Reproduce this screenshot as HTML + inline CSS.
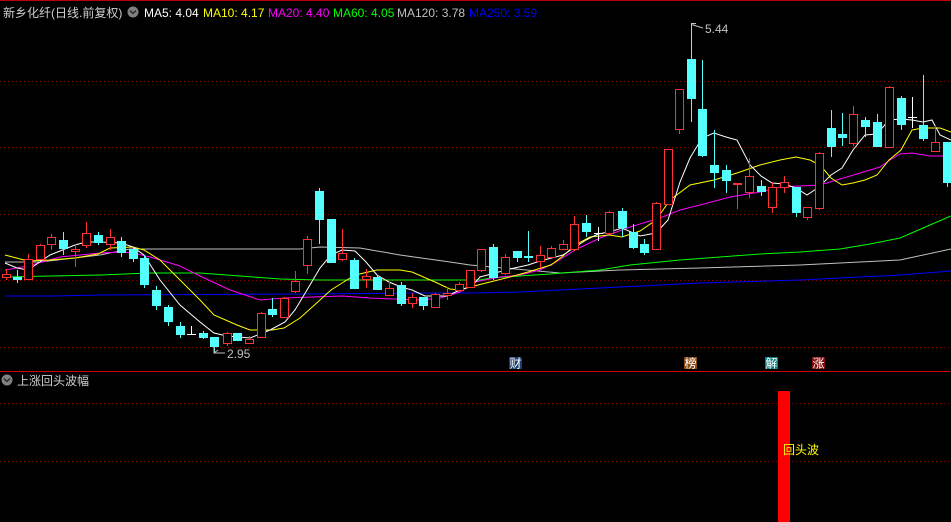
<!DOCTYPE html>
<html><head><meta charset="utf-8"><style>
html,body{margin:0;padding:0;background:#000;width:951px;height:522px;overflow:hidden}
svg{display:block}
text{font-family:"Liberation Sans","Noto Sans CJK SC",sans-serif;font-size:12px}
.g line{stroke:#8a0000;stroke-dasharray:1 3;stroke-width:1}
.r line,.r rect{stroke:#ff3232;stroke-width:1}
.r rect{fill:#000}
.c line,.c rect{stroke:#54ffff;stroke-width:1}
.c rect{fill:#54ffff}
.m polyline{fill:none;stroke-width:1}
</style></head><body>
<svg width="951" height="522" viewBox="0 0 951 522" xmlns="http://www.w3.org/2000/svg">
<rect width="951" height="522" fill="#000"/>
<line x1="0" y1="0.5" x2="951" y2="0.5" stroke="#c00000"/>
<g class="g">
<line x1="0" y1="81.5" x2="951" y2="81.5"/><line x1="0" y1="147.5" x2="951" y2="147.5"/>
<line x1="0" y1="214.5" x2="951" y2="214.5"/><line x1="0" y1="280.5" x2="951" y2="280.5"/>
<line x1="0" y1="347.5" x2="951" y2="347.5"/>
<line x1="0" y1="403.5" x2="951" y2="403.5"/><line x1="0" y1="461.5" x2="951" y2="461.5"/>
</g>
<line x1="0" y1="371.5" x2="951" y2="371.5" stroke="#d00000"/>

<g class="m">
<polyline stroke="#0000ff" points="5,296 55,296 100,295 300,294 420,293 470,293 520,292 620,287 700,283 800,280 900,275 951,271"/>
<polyline stroke="#c0c0c0" points="5,262 40,262 100,255 130,249 300,249 320,247 360,248 400,255 450,262 470,265 560,273 620,270 700,268 800,265 900,260 951,249"/>
<polyline stroke="#00ff00" points="5,277 50,276 100,275 150,273 200,273 240,276 280,279 320,280 480,280 490,278 550,274 600,270 630,265 680,260 720,257 760,254 800,252 840,249 870,244 900,238 930,225 951,216"/>
<polyline stroke="#ff00ff" points="5,270 28,266 60,257 100,253 121,252 133,253 150,257 180,266 200,276 230,290 260,300 284,298 342,296 370,298 420,300 440,298 460,292 475,282 500,277 520,275 540,270 556,262 575,250 600,238 630,227 660,218 680,210 700,205 730,197 760,192 780,187 820,185 840,179 860,173 880,167 890,160 900,154 912,153 930,156 951,156"/>
<polyline stroke="#ffff00" points="5,255 28,261 50,260 75,258 98,254 110,248 133,247 144,250 160,260 180,280 200,300 214,315 237,325 250,330 272,330 284,328 300,318 320,300 331,290 342,283 355,275 377,270 400,270 412,272 435,282 450,289 460,290 470,287 490,282 510,277 528,272 551,265 563,256 575,245 590,237 609,235 622,237 640,231 656,220 670,200 690,185 714,180 737,173 760,165 780,160 796,157 810,160 820,165 831,178 842,185 853,183 865,180 877,175 889,160 901,150 912,130 923,128 940,128 951,132"/>
<polyline stroke="#ffffff" points="5,263 17,268 28,270 50,255 75,245 86,242 100,242 121,243 133,247 144,255 160,280 180,305 200,322 214,333 227,336 250,338 270,330 285,322 295,310 307,290 320,268 331,255 342,250 355,251 366,262 377,275 389,282 401,287 412,290 425,296 447,296 460,290 472,286 480,277 495,273 510,269 528,265 540,261 563,255 586,240 598,234 609,232 622,228 640,236 656,233 668,220 680,182 690,158 702,138 714,133 726,137 737,140 750,165 761,176 772,183 784,184 796,188 807,195 819,187 831,175 842,168 853,150 865,135 877,134 889,120 901,119 912,120 923,122 932,120 940,135 951,140"/>
</g>

<g class="r">
<line x1="6.5" y1="269" x2="6.5" y2="280"/><rect x="2.5" y="274.5" width="8" height="3"/>
<line x1="28.5" y1="254" x2="28.5" y2="280"/><rect x="24.5" y="259.5" width="8" height="20"/>
<line x1="40.5" y1="244" x2="40.5" y2="260"/><rect x="36.5" y="245.5" width="8" height="14"/>
<line x1="51.5" y1="234" x2="51.5" y2="250"/><rect x="47.5" y="237.5" width="8" height="7"/>
<line x1="75.5" y1="244" x2="75.5" y2="267"/><rect x="71.5" y="249.5" width="8" height="2"/>
<line x1="86.5" y1="222" x2="86.5" y2="248"/><rect x="82.5" y="233.5" width="8" height="12"/>
<line x1="110.5" y1="229" x2="110.5" y2="250"/><rect x="106.5" y="237.5" width="8" height="7"/>
<line x1="227.5" y1="332" x2="227.5" y2="346"/><rect x="223.5" y="333.5" width="8" height="10"/>
<line x1="249.5" y1="336" x2="249.5" y2="343"/><rect x="245.5" y="339.5" width="8" height="4"/>
<line x1="261.5" y1="312" x2="261.5" y2="338"/><rect x="257.5" y="313.5" width="8" height="24"/>
<line x1="284.5" y1="297" x2="284.5" y2="318"/><rect x="280.5" y="298.5" width="8" height="19"/>
<line x1="295.5" y1="271" x2="295.5" y2="293"/><rect x="291.5" y="281.5" width="8" height="10"/>
<line x1="307.5" y1="236" x2="307.5" y2="274"/><rect x="303.5" y="239.5" width="8" height="26"/>
<line x1="342.5" y1="229" x2="342.5" y2="261"/><rect x="338.5" y="253.5" width="8" height="6"/>
<line x1="366.5" y1="269" x2="366.5" y2="288"/><rect x="362.5" y="276.5" width="8" height="3"/>
<line x1="389.5" y1="282" x2="389.5" y2="296"/><rect x="385.5" y="288.5" width="8" height="7"/>
<line x1="412.5" y1="293" x2="412.5" y2="308"/><rect x="408.5" y="297.5" width="8" height="6"/>
<line x1="435.5" y1="293" x2="435.5" y2="308"/><rect x="431.5" y="294.5" width="8" height="13"/>
<line x1="447.5" y1="287" x2="447.5" y2="300"/><rect x="443.5" y="293.5" width="8" height="2"/>
<line x1="459.5" y1="282" x2="459.5" y2="292"/><rect x="455.5" y="284.5" width="8" height="6"/>
<line x1="470.5" y1="270" x2="470.5" y2="288"/><rect x="466.5" y="270.5" width="8" height="17"/>
<line x1="481.5" y1="249" x2="481.5" y2="272"/><rect x="477.5" y="249.5" width="8" height="21"/>
<line x1="505.5" y1="254" x2="505.5" y2="275"/><rect x="501.5" y="257.5" width="8" height="16"/>
<line x1="540.5" y1="246" x2="540.5" y2="268"/><rect x="536.5" y="255.5" width="8" height="6"/>
<line x1="551.5" y1="246" x2="551.5" y2="258"/><rect x="547.5" y="248.5" width="8" height="9"/>
<line x1="563.5" y1="240" x2="563.5" y2="249"/><rect x="559.5" y="244.5" width="8" height="5"/>
<line x1="574.5" y1="216" x2="574.5" y2="251"/><rect x="570.5" y="224.5" width="8" height="25"/>
<line x1="609.5" y1="211" x2="609.5" y2="234"/><rect x="605.5" y="212.5" width="8" height="21"/>
<line x1="656.5" y1="202" x2="656.5" y2="250"/><rect x="652.5" y="203.5" width="8" height="46"/>
<line x1="668.5" y1="149" x2="668.5" y2="205"/><rect x="664.5" y="149.5" width="8" height="55"/>
<line x1="679.5" y1="89" x2="679.5" y2="134"/><rect x="675.5" y="89.5" width="8" height="40"/>
<line x1="737.5" y1="183" x2="737.5" y2="209"/><rect x="733.5" y="183.5" width="8" height="1"/>
<line x1="749.5" y1="158" x2="749.5" y2="198"/><rect x="745.5" y="176.5" width="8" height="16"/>
<line x1="772.5" y1="182" x2="772.5" y2="213"/><rect x="768.5" y="187.5" width="8" height="20"/>
<line x1="784.5" y1="176" x2="784.5" y2="193"/><rect x="780.5" y="182.5" width="8" height="5"/>
<line x1="807.5" y1="207" x2="807.5" y2="220"/><rect x="803.5" y="207.5" width="8" height="10"/>
<line x1="819.5" y1="152" x2="819.5" y2="210"/><rect x="815.5" y="153.5" width="8" height="55"/>
<line x1="853.5" y1="106" x2="853.5" y2="146"/><rect x="849.5" y="114.5" width="8" height="29"/>
<line x1="889.5" y1="86" x2="889.5" y2="148"/><rect x="885.5" y="87.5" width="8" height="60"/>
<line x1="935.5" y1="126" x2="935.5" y2="152"/><rect x="931.5" y="142.5" width="8" height="9"/>
</g>

<g class="c">
<line x1="17.5" y1="270" x2="17.5" y2="283"/><rect x="13.5" y="277.5" width="8" height="2"/>
<line x1="63.5" y1="232" x2="63.5" y2="255"/><rect x="59.5" y="240.5" width="8" height="8"/>
<line x1="98.5" y1="232" x2="98.5" y2="245"/><rect x="94.5" y="235.5" width="8" height="7"/>
<line x1="121.5" y1="237" x2="121.5" y2="257"/><rect x="117.5" y="241.5" width="8" height="11"/>
<line x1="133.5" y1="247" x2="133.5" y2="262"/><rect x="129.5" y="249.5" width="8" height="9"/>
<line x1="144.5" y1="255" x2="144.5" y2="288"/><rect x="140.5" y="258.5" width="8" height="26"/>
<line x1="156.5" y1="286" x2="156.5" y2="310"/><rect x="152.5" y="290.5" width="8" height="15"/>
<line x1="168.5" y1="305" x2="168.5" y2="326"/><rect x="164.5" y="307.5" width="8" height="14"/>
<line x1="180.5" y1="322" x2="180.5" y2="338"/><rect x="176.5" y="326.5" width="8" height="8"/>
<line x1="203.5" y1="331" x2="203.5" y2="339"/><rect x="199.5" y="333.5" width="8" height="4"/>
<line x1="214.5" y1="337" x2="214.5" y2="353"/><rect x="210.5" y="337.5" width="8" height="9"/>
<line x1="237.5" y1="333" x2="237.5" y2="341"/><rect x="233.5" y="333.5" width="8" height="7"/>
<line x1="272.5" y1="298" x2="272.5" y2="317"/><rect x="268.5" y="309.5" width="8" height="5"/>
<line x1="319.5" y1="188" x2="319.5" y2="244"/><rect x="315.5" y="191.5" width="8" height="28"/>
<rect x="327.5" y="219.5" width="8" height="43"/>
<line x1="354.5" y1="258" x2="354.5" y2="289"/><rect x="350.5" y="260.5" width="8" height="28"/>
<line x1="377.5" y1="276" x2="377.5" y2="290"/><rect x="373.5" y="277.5" width="8" height="12"/>
<line x1="401.5" y1="282" x2="401.5" y2="306"/><rect x="397.5" y="285.5" width="8" height="18"/>
<line x1="423.5" y1="297" x2="423.5" y2="310"/><rect x="419.5" y="297.5" width="8" height="8"/>
<line x1="493.5" y1="244" x2="493.5" y2="280"/><rect x="489.5" y="247.5" width="8" height="30"/>
<line x1="517.5" y1="251" x2="517.5" y2="262"/><rect x="513.5" y="251.5" width="8" height="6"/>
<line x1="528.5" y1="231" x2="528.5" y2="262"/><rect x="524.5" y="256.5" width="8" height="1"/>
<line x1="586.5" y1="215" x2="586.5" y2="237"/><rect x="582.5" y="223.5" width="8" height="8"/>
<line x1="622.5" y1="208" x2="622.5" y2="237"/><rect x="618.5" y="211.5" width="8" height="16"/>
<line x1="633.5" y1="224" x2="633.5" y2="249"/><rect x="629.5" y="232.5" width="8" height="15"/>
<line x1="644.5" y1="239" x2="644.5" y2="255"/><rect x="640.5" y="244.5" width="8" height="8"/>
<line x1="691.5" y1="23" x2="691.5" y2="122"/><rect x="687.5" y="59.5" width="8" height="39"/>
<line x1="702.5" y1="60" x2="702.5" y2="157"/><rect x="698.5" y="109.5" width="8" height="46"/>
<line x1="714.5" y1="130" x2="714.5" y2="188"/><rect x="710.5" y="165.5" width="8" height="7"/>
<line x1="726.5" y1="165" x2="726.5" y2="193"/><rect x="722.5" y="170.5" width="8" height="10"/>
<line x1="761.5" y1="180" x2="761.5" y2="196"/><rect x="757.5" y="186.5" width="8" height="5"/>
<line x1="796.5" y1="187" x2="796.5" y2="217"/><rect x="792.5" y="187.5" width="8" height="25"/>
<line x1="831.5" y1="110" x2="831.5" y2="157"/><rect x="827.5" y="128.5" width="8" height="18"/>
<line x1="842.5" y1="113" x2="842.5" y2="146"/><rect x="838.5" y="134.5" width="8" height="3"/>
<line x1="865.5" y1="117" x2="865.5" y2="137"/><rect x="861.5" y="120.5" width="8" height="6"/>
<line x1="877.5" y1="114" x2="877.5" y2="147"/><rect x="873.5" y="122.5" width="8" height="24"/>
<line x1="901.5" y1="96" x2="901.5" y2="130"/><rect x="897.5" y="98.5" width="8" height="26"/>
<line x1="923.5" y1="75" x2="923.5" y2="141"/><rect x="919.5" y="125.5" width="8" height="13"/>
<line x1="947.5" y1="142" x2="947.5" y2="187"/><rect x="943.5" y="142.5" width="8" height="40"/>
</g>
<g stroke="#ffffff">
<line x1="191.5" y1="326" x2="191.5" y2="335"/><line x1="187" y1="334.5" x2="196" y2="334.5"/>
<line x1="598.5" y1="227" x2="598.5" y2="241"/><line x1="594" y1="233.5" x2="603" y2="233.5"/>
<line x1="912.5" y1="97" x2="912.5" y2="128"/><line x1="908" y1="117.5" x2="917" y2="117.5"/>
</g>

<g stroke="#c0c0c0" fill="none">
<polyline points="693,23 693,25 703,28"/><line x1="692" y1="23.5" x2="696" y2="23.5"/>
<polyline points="214,347 214,353 225,353"/><line x1="214" y1="353" x2="218" y2="350"/>
</g>
<text x="705" y="33" fill="#c0c0c0">5.44</text>
<text x="227" y="358" fill="#c0c0c0">2.95</text>

<rect x="509" y="357" width="13" height="12" fill="#1a3f6e"/><text x="509.5" y="367.5" fill="#fff">财</text>
<rect x="684" y="357" width="13" height="12" fill="#8a4a12"/><text x="684.5" y="367.5" fill="#fff">榜</text>
<rect x="765" y="357" width="13" height="12" fill="#0f7f7f"/><text x="765.5" y="367.5" fill="#fff">解</text>
<rect x="812" y="357" width="13" height="12" fill="#800c0c"/><text x="812.5" y="367.5" fill="#fff">涨</text>

<text x="3" y="17" fill="#d0d0d0">新乡化纤(日线.前复权)</text>
<circle cx="133" cy="12" r="5.5" fill="#808080"/>
<polyline points="130,10.5 133,13.5 136,10.5" fill="none" stroke="#222" stroke-width="1.3"/>
<text x="144" y="17" fill="#ffffff">MA5: 4.04</text>
<text x="203" y="17" fill="#ffff00">MA10: 4.17</text>
<text x="268" y="17" fill="#ff00ff">MA20: 4.40</text>
<text x="333" y="17" fill="#00ff00">MA60: 4.05</text>
<text x="397" y="17" fill="#c0c0c0">MA120: 3.78</text>
<text x="469" y="17" fill="#0000ff">MA250: 3.59</text>

<circle cx="7" cy="380" r="5.5" fill="#808080"/>
<polyline points="4,378.5 7,381.5 10,378.5" fill="none" stroke="#222" stroke-width="1.3"/>
<text x="17" y="385" fill="#d0d0d0">上涨回头波幅</text>
<rect x="778" y="391" width="12" height="131" fill="#ff0000"/>
<text x="783" y="454" fill="#ffff00">回头波</text>
</svg>
</body></html>
